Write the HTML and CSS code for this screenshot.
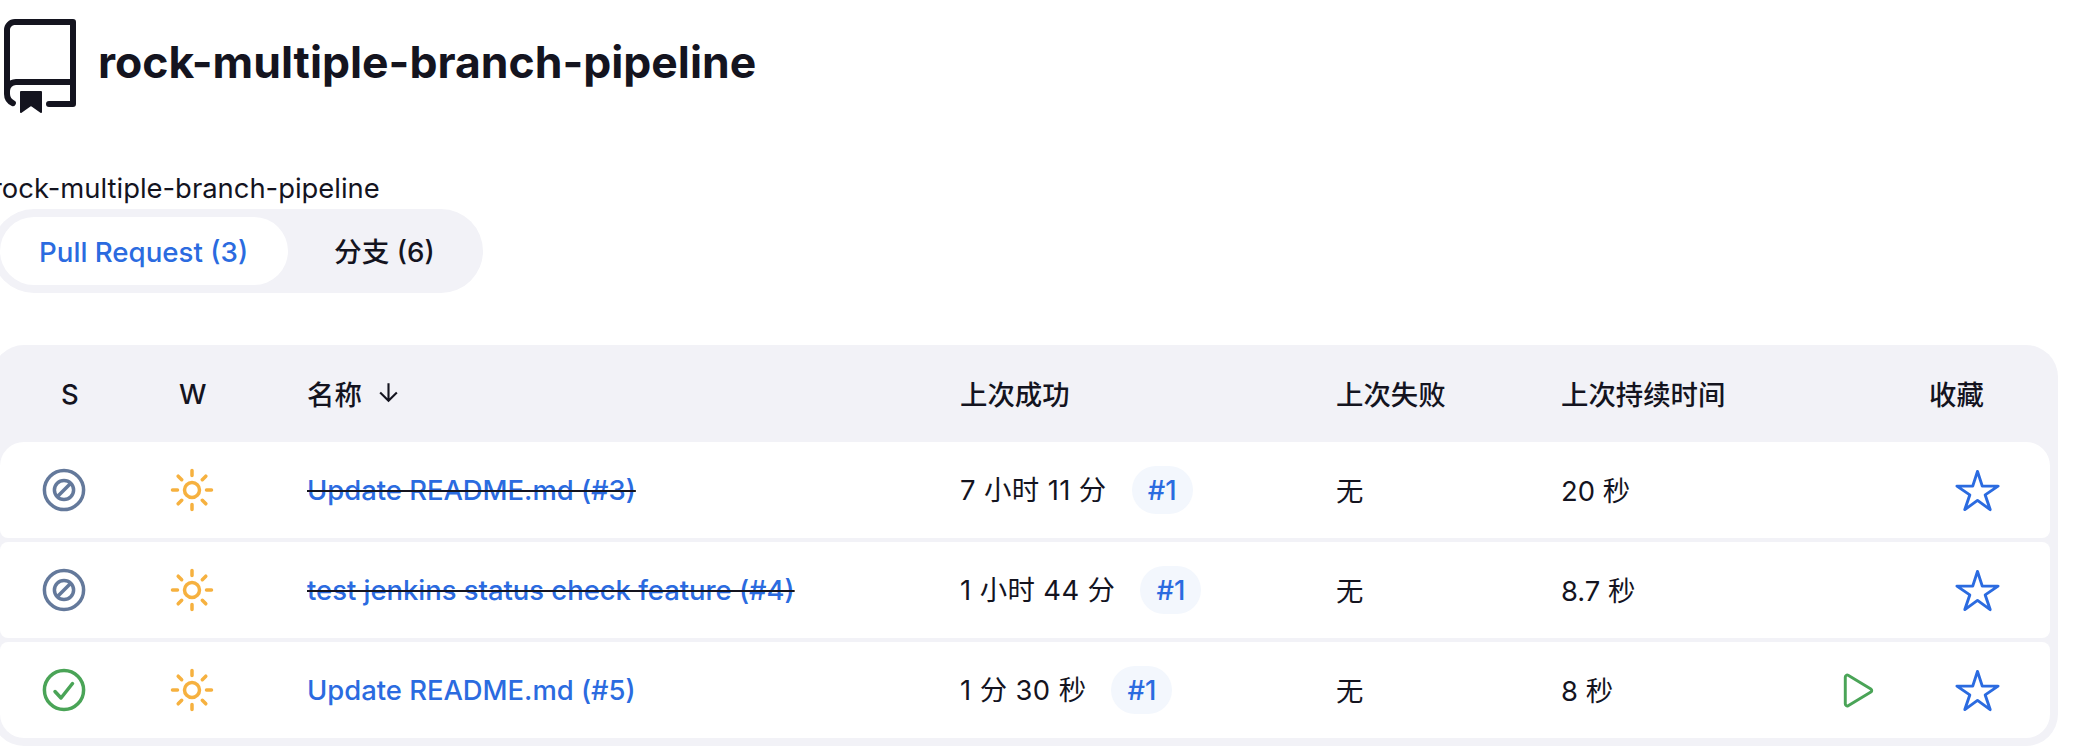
FILE: index.html
```html
<!DOCTYPE html>
<html lang="zh-CN">
<head>
  <meta charset="UTF-8" />
  <title>rock-multiple-branch-pipeline</title>
  <link rel="stylesheet" href="styles.css">
</head>
<body>
  <main class="page">
    <div class="title-row">
      <svg class="repo-icon" viewBox="0 0 24 24">
        <path d="M3 2.75A2.75 2.75 0 0 1 5.75 0h14.5a.75.75 0 0 1 .75.75v20.5a.75.75 0 0 1-.75.75h-6a.75.75 0 0 1 0-1.5h5.25v-4H6A1.5 1.5 0 0 0 4.5 18v.75c0 .716.43 1.334 1.05 1.605a.75.75 0 0 1-.6 1.374A3.251 3.251 0 0 1 3 18.75ZM19.5 1.5H5.75c-.69 0-1.25.56-1.25 1.25v12.651A2.989 2.989 0 0 1 6 15h13.5Z"/>
        <path d="M7 18.25a.25.25 0 0 1 .25-.25h5a.25.25 0 0 1 .25.25v5.01a.25.25 0 0 1-.397.201l-2.206-1.604a.25.25 0 0 0-.294 0L7.397 23.46a.25.25 0 0 1-.397-.2Z"/>
      </svg>
      <h1>rock-multiple-branch-pipeline</h1>
    </div>

    <p class="description">rock-multiple-branch-pipeline</p>

    <div class="tabs">
      <a class="tab active">Pull Request (3)</a>
      <a class="tab">分支 (6)</a>
    </div>

    <div class="table-card">
      <table>
        <colgroup>
          <col class="col-s"><col class="col-w"><col class="col-name"><col class="col-ok">
          <col class="col-fail"><col class="col-dur"><col class="col-run"><col class="col-fav">
        </colgroup>
        <thead>
          <tr>
            <th class="head-s">S</th>
            <th class="head-w">W</th>
            <th class="pad raised"><span class="sort">名称
              <svg class="arrow" viewBox="0 0 512 512"><path d="M112 268l144 144 144-144M256 392V100"/></svg></span></th>
            <th class="pad raised">上次成功</th>
            <th class="pad raised">上次失败</th>
            <th class="pad raised">上次持续时间</th>
            <th></th>
            <th class="head-fav raised">收藏</th>
          </tr>
        </thead>
        <tbody>
          <tr>
            <td class="cell-s">
              <svg class="status" viewBox="0 0 44 44"><circle class="ring-out" cx="22" cy="22" r="19.6"/><circle class="ring-in" cx="22" cy="22" r="9.6"/><path class="ring-in" d="M15.5 28.5l13-13"/></svg>
            </td>
            <td class="cell-w">
              <svg class="sun" viewBox="0 0 44 44"><circle cx="22" cy="22" r="7.5"/><path d="M22 2.5v5M22 36.500v5M2.500 22h5M36.500 22h5M8.200 8.200l3.500 3.500M32.300 32.300l3.500 3.500M8.200 35.800l3.500-3.500M32.300 11.700l3.500-3.500"/></svg>
            </td>
            <td class="pad"><s class="gone"><a class="link">Update README.md (#3)</a></s></td>
            <td class="pad"><span class="since">7 小时 11 分</span><a class="badge">#1</a></td>
            <td class="pad raised">无</td>
            <td class="pad raised">20 秒</td>
            <td></td>
            <td class="cell-fav">
              <svg class="star" viewBox="0 0 512 512"><path d="M480 208H308L256 48l-52 160H32l140 96-54 160 138-100 138 100-54-160z"/></svg>
            </td>
          </tr>
          <tr>
            <td class="cell-s">
              <svg class="status" viewBox="0 0 44 44"><circle class="ring-out" cx="22" cy="22" r="19.6"/><circle class="ring-in" cx="22" cy="22" r="9.6"/><path class="ring-in" d="M15.5 28.5l13-13"/></svg>
            </td>
            <td class="cell-w">
              <svg class="sun" viewBox="0 0 44 44"><circle cx="22" cy="22" r="7.5"/><path d="M22 2.5v5M22 36.500v5M2.500 22h5M36.500 22h5M8.200 8.200l3.500 3.500M32.300 32.300l3.500 3.500M8.200 35.800l3.500-3.500M32.300 11.700l3.500-3.500"/></svg>
            </td>
            <td class="pad"><s class="gone"><a class="link">test jenkins status check feature (#4)</a></s></td>
            <td class="pad"><span class="since">1 小时 44 分</span><a class="badge">#1</a></td>
            <td class="pad raised">无</td>
            <td class="pad raised">8.7 秒</td>
            <td></td>
            <td class="cell-fav">
              <svg class="star" viewBox="0 0 512 512"><path d="M480 208H308L256 48l-52 160H32l140 96-54 160 138-100 138 100-54-160z"/></svg>
            </td>
          </tr>
          <tr>
            <td class="cell-s">
              <svg class="status ok" viewBox="0 0 44 44"><circle class="ring-out" cx="22" cy="22" r="19.6"/><path class="tick" d="M13 23.500l6 6.500 11.500-14.500"/></svg>
            </td>
            <td class="cell-w">
              <svg class="sun" viewBox="0 0 44 44"><circle cx="22" cy="22" r="7.5"/><path d="M22 2.5v5M22 36.500v5M2.500 22h5M36.500 22h5M8.200 8.200l3.500 3.500M32.300 32.300l3.500 3.500M8.200 35.800l3.500-3.500M32.300 11.700l3.500-3.500"/></svg>
            </td>
            <td class="pad"><a class="link">Update README.md (#5)</a></td>
            <td class="pad"><span class="since">1 分 30 秒</span><a class="badge">#1</a></td>
            <td class="pad raised">无</td>
            <td class="pad raised">8 秒</td>
            <td class="cell-run">
              <svg class="play" viewBox="0 0 512 512"><path d="M112 111v290c0 17.44 17 28.520 31 20.160l247.900-148.860c12.120-7.250 12.120-26.330 0-33.580L143 90.840c-14-8.360-31 2.720-31 20.160z"/></svg>
            </td>
            <td class="cell-fav">
              <svg class="star" viewBox="0 0 512 512"><path d="M480 208H308L256 48l-52 160H32l140 96-54 160 138-100 138 100-54-160z"/></svg>
            </td>
          </tr>
        </tbody>
      </table>
    </div>
  </main>
</body>
</html>
```

FILE: styles.css
```css
html, body {
  margin: 0;
  overflow: hidden;
}

body {
  background: #fff;
  color: #14141f;
  font-family: Inter, "Noto Sans CJK SC", sans-serif;
  font-size: 27.4px;
}

.page {
  width: 2066px;
  margin-left: -8px;
  padding-top: 19px;
}

.title-row {
  display: flex;
  align-items: center;
  gap: 10px;
  height: 96px;
}

.repo-icon {
  width: 96px;
  height: 96px;
  flex: none;
  fill: #14141f;
}

h1 {
  margin: 0 0 10px;
  font-size: 44.5px;
  font-weight: 700;
  line-height: 56px;
}

.description {
  margin: 0;
  padding-top: 55px;
  height: 39px;
  line-height: 36px;
}

.tabs {
  display: inline-flex;
  gap: 6px;
  padding: 8px;
  background: #f2f2f7;
  border-radius: 42px;
  vertical-align: top;
}

.tab {
  padding: 19px 40px 17px;
  font-size: 27.7px;
  line-height: 32px;
  font-weight: 500;
  border-radius: 34px;
}

.tab.active {
  padding-left: 39px;
  background: #fff;
  color: #2b6be0;
}

.table-card {
  margin-top: 52px;
  padding: 0 8px 4px;
  background: #f2f2f7;
  border-radius: 32px;
}

table {
  width: 2050px;
  table-layout: fixed;
  border-collapse: separate;
  border-spacing: 0 4px;
}

.col-s { width: 128px; }
.col-w { width: 164px; }
.col-name { width: 653px; }
.col-ok { width: 376px; }
.col-fail { width: 225px; }
.col-dur { width: 270px; }
.col-run { width: 104px; }
.col-fav { width: 130px; }

th, td {
  box-sizing: border-box;
  padding: 0;
}

th {
  height: 89px;
  text-align: left;
  font-weight: 500;
}

td {
  height: 96px;
  background: #fff;
}

td:first-child {
  border-top-left-radius: 8px;
  border-bottom-left-radius: 8px;
}

td:last-child {
  border-top-right-radius: 8px;
  border-bottom-right-radius: 8px;
}

tbody tr:first-child td:first-child { border-top-left-radius: 24px; }
tbody tr:first-child td:last-child { border-top-right-radius: 24px; }
tbody tr:last-child td:first-child { border-bottom-left-radius: 24px; }
tbody tr:last-child td:last-child { border-bottom-right-radius: 24px; }

.pad { padding-left: 15px; }
.raised { padding-bottom: 2px; }
.head-s { padding-left: 61px; }
.head-w { padding-left: 51px; }
.head-fav { padding-left: 9px; }
.cell-s { padding-left: 42px; }
.cell-w { padding-left: 42px; }
.cell-run { padding-left: 19px; }
.cell-fav { padding-left: 34px; }

.sort {
  display: inline-flex;
  align-items: center;
  gap: 13px;
}

.arrow {
  width: 27px;
  height: 27px;
  fill: none;
  stroke: #14141f;
  stroke-width: 40;
  stroke-linecap: square;
}

.link {
  color: #2b6be0;
  font-weight: 500;
}

.gone {
  color: #14141f;
  text-decoration: line-through;
}

.since {
  margin-right: 25px;
  letter-spacing: 0.4px;
}

.badge {
  display: inline-block;
  padding: 0 16px;
  line-height: 48px;
  color: #2b6be0;
  font-weight: 500;
  background: #f3f7fd;
  border-radius: 24px;
}

svg {
  display: block;
}

.status {
  width: 44px;
  height: 44px;
  fill: none;
  stroke: #64799b;
}

.status.ok {
  stroke: #4aa457;
}

.ring-out { stroke-width: 3.5; }
.ring-in { stroke-width: 3.5; }
.tick {
  stroke-width: 3.5;
  stroke-linecap: round;
  stroke-linejoin: round;
}

.sun {
  width: 44px;
  height: 44px;
  fill: none;
  stroke: #f6b13f;
  stroke-width: 3.5;
  stroke-linecap: round;
}

.star {
  width: 47px;
  height: 47px;
  fill: none;
  stroke: #2b6be0;
  stroke-width: 32;
  stroke-linejoin: round;
}

.play {
  width: 47px;
  height: 47px;
  fill: none;
  stroke: #4aa457;
  stroke-width: 32;
  stroke-miterlimit: 10;
}
```
